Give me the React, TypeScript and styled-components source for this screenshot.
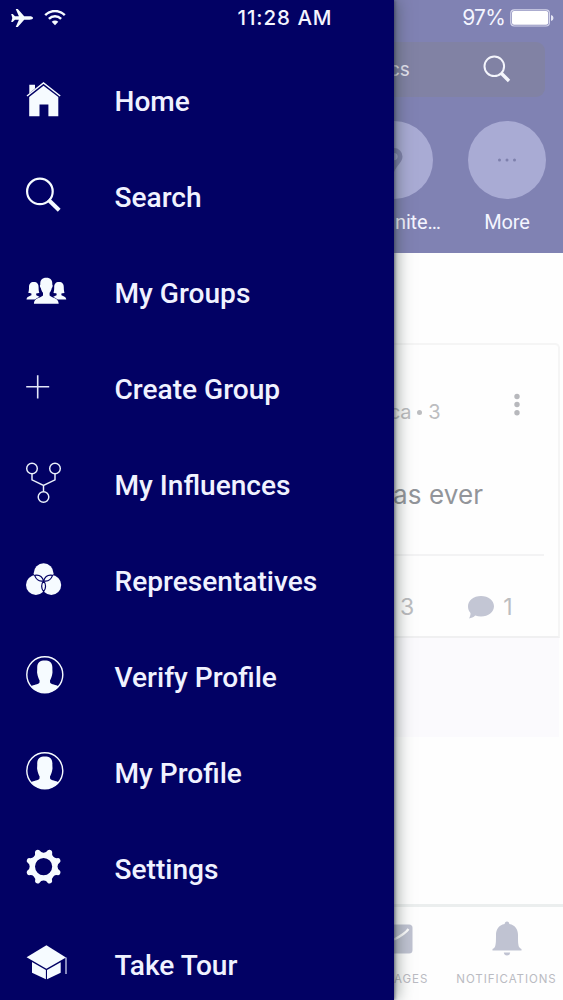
import React from "react";
import styled, { createGlobalStyle } from "styled-components";

const NAVY = "#020164";

const GlobalStyle = createGlobalStyle`
  * { box-sizing: border-box; }
  body { margin: 0; background: #fefefe; }
`;

const Screen = styled.div`
  position: relative;
  display: flex;
  width: 563px;
  height: 1000px;
  overflow: hidden;
  background: #fefefe;
  font-family: Roboto, "Liberation Sans", sans-serif;
`;

const StatusBar = styled.header`
  position: absolute;
  z-index: 3;
  top: 0;
  left: 0;
  width: 100%;
  height: 36px;
  display: grid;
  grid-template-columns: 200px 170px 1fr;
  align-items: center;
  color: #f4f5ff;
  font: 400 21px/36px Inter, sans-serif;
`;

const StatusLeft = styled.div`
  display: flex;
  align-items: center;
  gap: 10px;
  padding-left: 10px;
`;

const Clock = styled.div`
  text-align: center;
  font-size: 20.5px;
  font-weight: 500;
  letter-spacing: 0.95px;
  white-space: nowrap;
`;

const StatusRight = styled.div`
  display: flex;
  align-items: center;
  justify-content: flex-end;
  gap: 5px;
  padding-right: 9px;
  letter-spacing: -0.8px;
`;

const Drawer = styled.nav`
  position: relative;
  z-index: 2;
  flex: 0 0 394px;
  height: 1000px;
  padding-top: 54px;
  background: ${NAVY};
  box-shadow: 1px 0 3px rgba(40, 50, 70, 0.6), 3px 0 15px rgba(50, 65, 60, 0.5);
`;

const MenuItem = styled.a`
  display: flex;
  align-items: center;
  height: 96px;
  padding-left: 24px;
  gap: 46.5px;
  color: #f0f2ff;
`;

const MenuLabel = styled.span`
  font-size: 28.1px;
  font-weight: 500;
  line-height: 36px;
  white-space: nowrap;
`;

const MenuIcon = styled.svg`
  flex: none;
  width: 44px;
  height: 44px;
  overflow: visible;
  fill: #f6fbff;
`;

const Page = styled.main`
  display: flex;
  flex-direction: column;
  flex: 1;
  min-width: 0;
  height: 1000px;
  overflow: hidden;
`;

const Hero = styled.section`
  flex: none;
  height: 253px;
  padding-top: 42px;
  background: #8082b3;
  color: #f4f5ff;
`;

const SearchBar = styled.div`
  display: flex;
  align-items: center;
  justify-content: space-between;
  width: 151px;
  height: 55px;
  padding: 0 34px 2px 0;
  border-radius: 0 9px 9px 0;
  background: #8182a4;
  font: 400 19px Inter, sans-serif;
  color: #e6e6f2;
`;

const SearchText = styled.span`
  margin-left: -5px;
  padding-top: 2px;
  letter-spacing: -0.2px;
`;

const Topics = styled.div`
  display: flex;
  justify-content: space-between;
  padding: 24px 17px 0 0;
  margin-left: -39px;
`;

const Topic = styled.div`
  display: flex;
  flex-direction: column;
  align-items: center;
  width: 78px;
  font-size: 20px;
  line-height: 26px;
  gap: 10px;
`;

const TopicCircle = styled.div`
  display: grid;
  place-items: center;
  width: 78px;
  height: 78px;
  border-radius: 50%;
  background: #a9abd4;
`;

const TopicName = styled.span<{ $clipped?: boolean }>`
  align-self: ${(p) => (p.$clipped ? "flex-start" : "center")};
  padding-left: ${(p) => (p.$clipped ? 40 : 0)}px;
  letter-spacing: -0.15px;
  white-space: nowrap;
`;

const Post = styled.article`
  flex: none;
  width: 166px;
  height: 295px;
  margin-top: 90px;
  border: solid #f5f5f5;
  border-width: 2px 2px 2px 0;
  border-bottom-color: #f0f0f1;
  border-radius: 0 5px 0 0;
  font-family: Inter, sans-serif;
  color: #bcbdc0;
`;

const PostHead = styled.div`
  display: flex;
  align-items: center;
  justify-content: space-between;
  height: 120px;
  padding: 0 37px 0 0;
  font-size: 20px;
`;

const PostMeta = styled.span`
  display: flex;
  align-items: center;
  gap: 6px;
  margin-left: -5px;
  padding-top: 14px;
  letter-spacing: -0.3px;
`;

const Bullet = styled.i`
  width: 5px;
  height: 5px;
  border-radius: 50%;
  background: #bcbdc0;
`;

const PostTitle = styled.div`
  height: 91px;
  margin-right: 14px;
  padding-top: 13px;
  margin-left: -1px;
  border-bottom: 2px solid #f3f3f4;
  font-size: 26px;
  line-height: 34px;
  letter-spacing: 0.1px;
  color: #92959a;
`;

const PostStats = styled.div`
  display: flex;
  align-items: center;
  padding: 35px 0 0 6px;
  font-size: 23px;
  line-height: 32px;
`;

const Comments = styled.span`
  display: flex;
  align-items: center;
  gap: 8px;
  margin-left: 53px;
`;

const Filler = styled.div`
  flex: none;
  width: 165px;
  height: 99px;
  background: #fbfafd;
`;

const TabBar = styled.footer`
  display: flex;
  height: 96px;
  margin-top: auto;
  border-top: 3px solid #ebeeee;
  font: 400 11.5px/16px Inter, sans-serif;
  color: #babbc2;
`;

const Tab = styled.div<{ $w: number }>`
  display: flex;
  flex-direction: column;
  align-items: ${(p) => (p.$w < 60 ? "flex-start" : "center")};
  flex: 0 0 ${(p) => p.$w}px;
  padding-top: 14px;
  gap: 14px;
  letter-spacing: 0.95px;
  white-space: nowrap;
`;

const personPath =
  "M-7.6 -7C-7.6 -12.5 -4.5 -14.2 0 -14.2S7.6 -12.5 7.6 -7C7.4 -5 8 -2.6 7.5 -1C7.2 1.4 6.2 4 5.2 5.6L5.3 7.6C6.2 9.8 11.5 9.6 13.8 11.6A18 18 0 0 1 -13.8 11.6C-11.5 9.6 -6.2 9.8 -5.3 7.6L-5.2 5.6C-6.2 4 -7.2 1.4 -7.5 -1C-8 -2.6 -7.4 -5 -7.6 -7Z";

const gearPath = (() => {
  const at = (deg: number, r: number) => {
    const a = (deg * Math.PI) / 180;
    return `${(Math.cos(a) * r).toFixed(2)} ${(Math.sin(a) * r).toFixed(2)}`;
  };
  let d = "";
  for (let i = 0; i < 8; i++) {
    const c = 22.5 + i * 45;
    d += `${i ? "L" : "M"}${at(c - 8, 16.9)}Q${at(c - 5, 18.2)} ${at(c, 18)}Q${at(c + 5, 18.2)} ${at(c + 8, 16.9)}`;
    d += `Q${at(c + 12, 14)} ${at(c + 22.5, 13.9)}Q${at(c + 33, 14)} ${at(c + 37, 16.9)}`;
  }
  return d + "ZM8.6 0A8.6 8.6 0 1 0 -8.6 0A8.6 8.6 0 1 0 8.6 0Z";
})();

const HomeIcon = () => (
  <MenuIcon viewBox="0 0 44 44">
    <path d="M5.3 13.4V4.8H11V8.6Z" />
    <path d="M3 16L19.5 3L36.2 16" fill="none" stroke="#f6fbff" strokeWidth="1.5" />
    <path d="M5.2 17L19.5 5.7L34.3 17V36.2H24.4V24.6H15.5V36.2H5.2Z" />
  </MenuIcon>
);

const SearchIcon = () => (
  <MenuIcon viewBox="0 0 44 44">
    <circle cx="15.9" cy="15.4" r="12.8" fill="none" stroke="#f6fbff" strokeWidth="2.2" />
    <path d="M24.4 23.8L35.2 34.2" stroke="#f6fbff" strokeWidth="4" />
  </MenuIcon>
);

const GroupsIcon = () => {
  const side =
    "M0 -6.3C3.4 -6.3 4.8 -4.4 4.8 -.8C4.8 1 5 3.4 5.6 4.4C4.8 5.1 3.6 5.3 2.4 5.3V7C4.3 8 7 8.3 7.3 11.2H-7.3C-7 8.3 -4.3 8 -2.4 7V5.3C-3.6 5.3 -4.8 5.1 -5.6 4.4C-5 3.4 -4.8 1 -4.8 -.8C-4.8 -4.4 -3.4 -6.3 0 -6.3Z";
  return (
    <MenuIcon viewBox="0 0 44 44">
      <path transform="translate(9.8 16.2)" d={side} />
      <path transform="translate(35 16.2)" d={side} />
      <path
        stroke={NAVY}
        strokeWidth="1.4"
        paintOrder="stroke"
        d="M22.3 5.8C26.6 5.8 28.6 8.2 28.3 12.5C29 13 28.7 15.3 27.8 16C27.4 18.2 26.5 19.7 25.6 20.8V23.5C27.8 26.2 34.6 25.5 34.7 31.8H9.9C10 25.5 16.8 26.2 19 23.5V20.8C18.1 19.7 17.2 18.2 16.8 16C15.9 15.3 15.6 13 16.3 12.5C16 8.2 18 5.8 22.3 5.8Z"
      />
    </MenuIcon>
  );
};

const PlusIcon = () => (
  <MenuIcon viewBox="0 0 44 44">
    <path d="M2.2 18.8H25.2M13.7 7.2V30.4" stroke="#e2e6f8" strokeWidth="1.6" />
  </MenuIcon>
);

const InfluencesIcon = () => (
  <MenuIcon viewBox="0 0 44 44">
    <g fill="none" stroke="#eaf0fb" strokeWidth="1.45">
      <circle cx="8" cy="4.5" r="5.3" />
      <circle cx="31" cy="4.5" r="5.3" />
      <circle cx="19.5" cy="33" r="5.3" />
      <path d="M8 9.8V15.8L19.5 21.5L31 15.8V9.8M19.5 21.5V27.7" />
    </g>
  </MenuIcon>
);

const circles = [
  [19.6, 13.2],
  [11.9, 25],
  [27.3, 25],
];

const RepresentativesIcon = () => (
  <MenuIcon viewBox="0 0 44 44">
    {circles.map(([x, y], i) => (
      <circle key={i} cx={x} cy={y} r="9.9" />
    ))}
    <g fill="#f6fbff" stroke={NAVY} strokeWidth="1.2" strokeLinejoin="round">
      <path d="M19.6 20.8C15.8 21.6 12.2 19.6 10.6 15.4C14.6 14.6 18.2 16.6 19.6 20.8Z" />
      <path d="M19.6 20.8C23.4 21.6 27 19.6 28.6 15.4C24.6 14.6 21 16.600 19.6 20.8Z" />
      <path d="M19.6 20.8C17 24 17 28.600 19.6 31.6C22.2 28.600 22.2 24 19.6 20.8Z" />
    </g>
  </MenuIcon>
);

const ProfileIcon = () => (
  <MenuIcon viewBox="0 0 44 44">
    <g transform="translate(20.8 18.8)">
      <circle r="18" fill="none" stroke="#f6fbff" strokeWidth="1.4" />
      <path d={personPath} />
    </g>
  </MenuIcon>
);

const SettingsIcon = () => (
  <MenuIcon viewBox="0 0 44 44">
    <path transform="translate(19.6 18.6)" fillRule="evenodd" d={gearPath} />
  </MenuIcon>
);

const TourIcon = () => (
  <MenuIcon viewBox="0 0 44 44">
    <path d="M22.4 1.3L42 13.5L22.4 24.8L2.6 13.3Z" />
    <path d="M8 18L21.9 26V35.3L8 28.7ZM23 26L36.7 18.2V28.7L23 35.3Z" />
    <path d="M42 13.5V30" stroke="#dfe5fb" strokeWidth="1.2" />
  </MenuIcon>
);

const items: { label: string; Icon: React.FC }[] = [
  { label: "Home", Icon: HomeIcon },
  { label: "Search", Icon: SearchIcon },
  { label: "My Groups", Icon: GroupsIcon },
  { label: "Create Group", Icon: PlusIcon },
  { label: "My Influences", Icon: InfluencesIcon },
  { label: "Representatives", Icon: RepresentativesIcon },
  { label: "Verify Profile", Icon: ProfileIcon },
  { label: "My Profile", Icon: ProfileIcon },
  { label: "Settings", Icon: SettingsIcon },
  { label: "Take Tour", Icon: TourIcon },
];

export default function App() {
  return (
    <Screen>
      <GlobalStyle />
      <StatusBar>
        <StatusLeft>
          <svg width="24" height="20" viewBox="0 0 24 20" fill="#f6fbff">
            <path d="M23 10C23 11.2 21.5 11.7 19.5 11.7H14.2L7.8 19H5.7L8.9 11.7H5L2.7 14H1.2L2.3 10L1.2 6H2.7L5 8.3H8.9L5.7 1H7.8L14.2 8.3H19.5C21.5 8.3 23 8.8 23 10Z" />
          </svg>
          <svg width="22" height="16" viewBox="0 0 22 16" fill="none" stroke="#f6fbff" strokeWidth="2.5">
            <path d="M1.2 5.1C6.8 -.3 15.2 -.3 20.8 5.1" />
            <path d="M4.9 8.9C8.4 5.5 13.6 5.5 17.1 8.9" />
            <path d="M7.7 11.8C9.6 10 12.4 10 14.3 11.8L11 15.2Z" fill="#f6fbff" stroke="none" />
          </svg>
        </StatusLeft>
        <Clock>11:28 AM</Clock>
        <StatusRight>
          97%
          <svg width="44" height="18" viewBox="0 0 44 18">
            <rect x=".8" y=".8" width="38.6" height="16.2" rx="3.5" fill="none" stroke="#d5d6ec" strokeWidth="1.2" />
            <rect x="2" y="2" width="36.2" height="13.8" rx="2" fill="#fff" />
            <path d="M41 6Q43.5 6.5 43.5 9T41 12Z" fill="#e6e7f5" />
          </svg>
        </StatusRight>
      </StatusBar>

      <Drawer>
        {items.map(({ label, Icon }) => (
          <MenuItem key={label}>
            <Icon />
            <MenuLabel>{label}</MenuLabel>
          </MenuItem>
        ))}
      </Drawer>

      <Page>
        <Hero>
          <SearchBar>
            <SearchText>cs</SearchText>
            <svg width="28" height="28" viewBox="0 0 28 28" fill="none" stroke="#f4f5fc">
              <circle cx="11.3" cy="11.3" r="9.8" strokeWidth="2" />
              <path d="M18.3 18.3L26 26" strokeWidth="3.4" />
            </svg>
          </SearchBar>
          <Topics>
            <Topic>
              <TopicCircle>
                <svg width="20" height="26" viewBox="0 0 20 26">
                  <path
                    d="M10 1A8.5 8.5 0 0 1 18.5 9.5C18.5 15 13 18 10 25C7 18 1.5 15 1.5 9.5A8.5 8.5 0 0 1 10 1ZM10 6A3.6 3.6 0 1 0 10 13.2A3.6 3.6 0 1 0 10 6Z"
                    fill="#8082ad"
                    fillRule="evenodd"
                  />
                </svg>
              </TopicCircle>
              <TopicName $clipped>nite…</TopicName>
            </Topic>
            <Topic>
              <TopicCircle>
                <svg width="20" height="4" viewBox="0 0 20 4" fill="#7e80ac">
                  <circle cx="2.5" cy="2" r="1.5" />
                  <circle cx="10" cy="2" r="1.5" />
                  <circle cx="17.5" cy="2" r="1.5" />
                </svg>
              </TopicCircle>
              <TopicName>More</TopicName>
            </Topic>
          </Topics>
        </Hero>

        <Post>
          <PostHead>
            <PostMeta>
              <span>ca</span>
              <Bullet />
              <span>3</span>
            </PostMeta>
            <svg width="8" height="24" viewBox="0 0 8 24" fill="#b7b8bc">
              <circle cx="4" cy="3.5" r="2.7" />
              <circle cx="4" cy="11.5" r="2.7" />
              <circle cx="4" cy="19.7" r="2.7" />
            </svg>
          </PostHead>
          <PostTitle>as ever</PostTitle>
          <PostStats>
            <span>3</span>
            <Comments>
              <svg width="28" height="24" viewBox="0 0 28 24" fill="#c3c6d4">
                <path d="M14 1C21.5 1 27 5.5 27 11.3S21.5 21.6 14 21.6C12 21.6 10 21.3 8.2 20.6C6.5 22.3 4.3 23.4 2 23.4C3 21.8 3.6 20 3.5 18C1.8 16.2 1 13.9 1 11.3C1 5.5 6.5 1 14 1Z" />
              </svg>
              <span>1</span>
            </Comments>
          </PostStats>
        </Post>
        <Filler />

        <TabBar>
          <Tab $w={56}>
            <svg width="19" height="36" viewBox="0 0 19 36">
              <path d="M0 3.5H15Q18.5 3.5 18.5 7V29Q18.5 32.5 15 32.5H0Z" fill="#c0c3d2" />
              <path d="M0 18.5C6 15.5 11 13 14.5 8" fill="none" stroke="#fff" strokeWidth="2.2" />
            </svg>
            <span>AGES</span>
          </Tab>
          <Tab $w={113}>
            <svg width="30" height="36" viewBox="0 0 30 36" fill="#c0c3d2">
              <path d="M15 .5C16.5 .5 17.3 1.5 17.3 3C23.5 4.2 26 8.7 26 14C26 20.5 26 24 27.3 26.3Q28 27.3 29.5 28V29.5H.5V28Q2 27.3 2.7 26.3C4 24 4 20.5 4 14C4 8.7 6.5 4.2 12.7 3C12.7 1.5 13.5 .5 15 .5Z" />
              <path d="M11.8 31.5H18.2Q17.8 34.5 15 34.5T11.8 31.5Z" />
            </svg>
            <span>NOTIFICATIONS</span>
          </Tab>
        </TabBar>
      </Page>
    </Screen>
  );
}
